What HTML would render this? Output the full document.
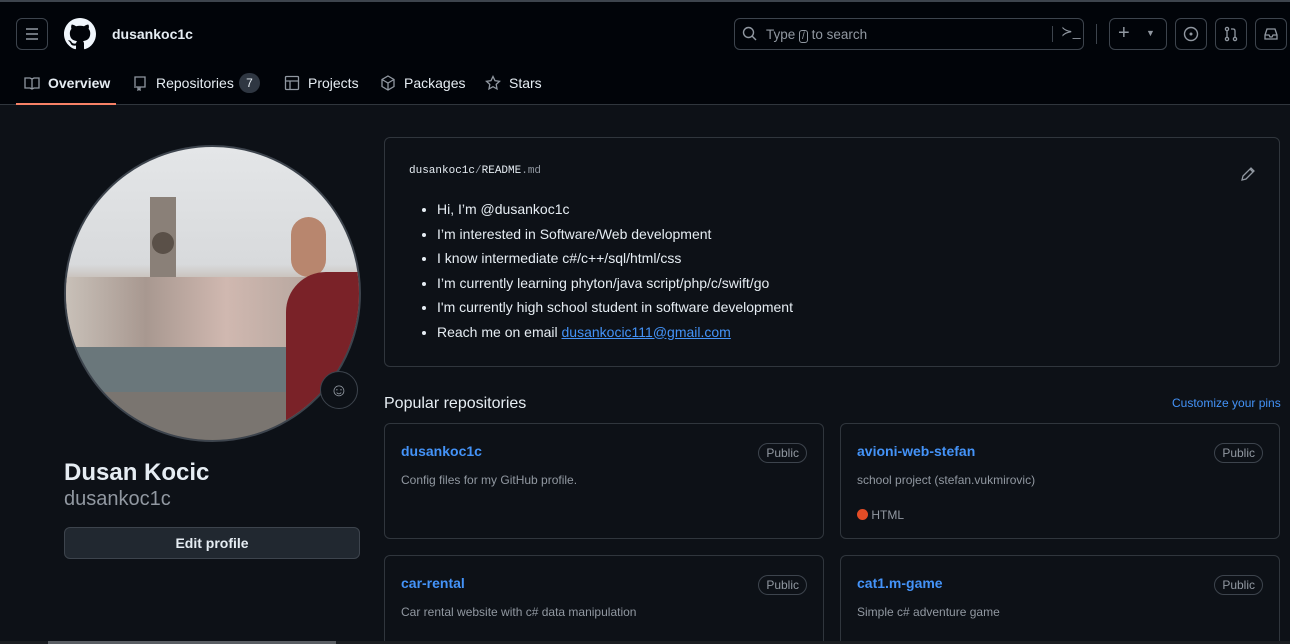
<!DOCTYPE html>
<html style="width:1290px;height:644px;overflow:hidden"><head><meta charset="utf-8"><style>
*{box-sizing:border-box;margin:0;padding:0}
html,body{width:1290px;height:644px;overflow:hidden}
body{background:#0d1117;font-family:"Liberation Sans",sans-serif;color:#e6edf3;position:relative}
.hdr{position:absolute;left:0;top:0;width:1290px;height:105px;background:#010409;border-top:2px solid #3d444d;border-bottom:1px solid #30363d}
.btn{position:absolute;border:1px solid #3d444d;border-radius:6px}
.a{position:absolute}
.tab{position:absolute;top:73px;font-size:14px;color:#e6edf3}
.card{position:absolute;border:1px solid #30363d;border-radius:6px;background:#0d1117}
.rn{position:absolute;left:16px;top:19px;font-size:14px;font-weight:bold;color:#4493f8}
.pub{position:absolute;right:16px;top:19px;border:1px solid #3d444d;border-radius:10px;font-size:12px;color:#9198a1;padding:2px 7px;height:20px}
.ds{position:absolute;left:16px;top:49px;font-size:12px;color:#9198a1}
li{margin-bottom:7px}
</style></head><body>
<div class="hdr">
<div class="btn" style="left:16px;top:16px;width:32px;height:32px"><svg width="30" height="30" style="position:absolute;left:0;top:0"><path d="M9 10h12M9 15h12M9 20h12" stroke="#9198a1" stroke-width="1.5"/></svg></div>
<svg class="a" style="left:64px;top:16px" width="32" height="32" viewBox="0 0 16 16"><path fill="#f0f6fc" d="M8 0C3.58 0 0 3.58 0 8c0 3.54 2.290 6.53 5.47 7.59.4.07.55-.17.55-.38 0-.19-.01-.82-.01-1.49-2.01.37-2.53-.49-2.690-.94-.09-.23-.48-.94-.82-1.13-.28-.15-.68-.52-.01-.53.63-.01 1.080.58 1.230.82.72 1.21 1.870.87 2.330.66.07-.52.28-.87.51-1.07-1.78-.2-3.64-.89-3.64-3.95 0-.87.31-1.59.82-2.15-.08-.2-.36-1.020.08-2.12 0 0 .67-.21 2.2.82.64-.18 1.32-.27 2-.27.68 0 1.360.09 2 .27 1.53-1.04 2.2-.82 2.2-.82.44 1.1.16 1.920.08 2.12.51.56.82 1.27.82 2.15 0 3.07-1.87 3.75-3.65 3.95.29.25.54.73.54 1.48 0 1.07-.01 1.93-.01 2.2 0 .21.15.46.55.38A8.013 8.013 0 0016 8c0-4.42-3.58-8-8-8z"/></svg>
<div class="a" style="left:112px;top:24px;font-size:14px;font-weight:bold">dusankoc1c</div>
<div class="btn" style="left:734px;top:16px;width:350px;height:32px"><svg class="a" style="left:7px;top:7px" width="16" height="16"><circle cx="6.5" cy="6.5" r="5" stroke="#9198a1" stroke-width="1.4" fill="none"/><path d="M10 10l4 4" stroke="#9198a1" stroke-width="1.4"/></svg>
<div class="a" style="left:31px;top:8px;font-size:13.5px;color:#9198a1">Type <span style="border:1px solid #9198a1;border-radius:3px;font-size:10px;padding:0 2px">/</span> to search</div>
<div class="a" style="left:317px;top:7px;width:1px;height:16px;background:#3d444d"></div>
<div class="a" style="left:326px;top:4px;color:#9198a1;font-size:14px">≻_</div></div>
<div class="a" style="left:1096px;top:22px;width:1px;height:20px;background:#3d444d"></div>
<div class="btn" style="left:1109px;top:16px;width:58px;height:32px;color:#9198a1"><span class="a" style="left:8px;top:3px;font-size:20px">+</span><span class="a" style="left:36px;top:9px;font-size:9px">▼</span></div>
<div class="btn" style="left:1175px;top:16px;width:32px;height:32px"><svg class="a" style="left:7px;top:7px" width="16" height="16"><circle cx="8" cy="8" r="6.5" stroke="#9198a1" stroke-width="1.4" fill="none"/><circle cx="8" cy="8" r="1.5" fill="#9198a1"/></svg></div>
<div class="btn" style="left:1215px;top:16px;width:32px;height:32px"><svg class="a" style="left:7px;top:7px" width="16" height="16" fill="none" stroke="#9198a1" stroke-width="1.3"><circle cx="4" cy="3" r="1.6"/><circle cx="4" cy="13" r="1.6"/><circle cx="12" cy="13" r="1.6"/><path d="M4 5v6M12 11V5q0-2-2-2H8"/></svg></div>
<div class="btn" style="left:1255px;top:16px;width:32px;height:32px"><svg class="a" style="left:7px;top:7px" width="16" height="16" fill="none" stroke="#9198a1" stroke-width="1.3"><path d="M2 9l2-6h8l2 6v4H2z M2 9h4l1 2h2l1-2h4"/></svg></div>
<svg class="a" style="left:24px;top:73px" width="16" height="16" fill="none" stroke="#9198a1" stroke-width="1.3"><path d="M1 3h5l2 1 2-1h5v10h-5l-2 1-2-1H1z M8 4v10"/></svg>
<div class="tab" style="left:48px;font-weight:bold">Overview</div>
<div class="a" style="left:16px;top:101px;width:100px;height:2px;background:#f78166"></div>
<svg class="a" style="left:132px;top:73px" width="16" height="16" fill="none" stroke="#9198a1" stroke-width="1.3"><path d="M3 13V2h10v10H4M6 12v3l1-1 1 1v-3"/></svg>
<div class="tab" style="left:156px">Repositories</div>
<div class="a" style="left:239px;top:71px;width:21px;height:20px;border-radius:10px;background:#2f3742;font-size:12px;text-align:center;line-height:20px">7</div>
<svg class="a" style="left:284px;top:73px" width="16" height="16" fill="none" stroke="#9198a1" stroke-width="1.3"><rect x="1.5" y="1.5" width="13" height="13" rx="1"/><path d="M1.5 6h13M6 6v8.5"/></svg>
<div class="tab" style="left:308px">Projects</div>
<svg class="a" style="left:380px;top:73px" width="16" height="16" fill="none" stroke="#9198a1" stroke-width="1.3"><path d="M8 1l6 3.5v7L8 15l-6-3.5v-7z M2 4.5L8 8l6-3.5M8 8v7"/></svg>
<div class="tab" style="left:404px">Packages</div>
<svg class="a" style="left:485px;top:73px" width="16" height="16" fill="none" stroke="#9198a1" stroke-width="1.3"><path d="M8 1.5l2 4.2 4.5.6-3.3 3.1.8 4.5L8 11.7l-4 2.2.8-4.5L1.5 6.3 6 5.7z"/></svg>
<div class="tab" style="left:509px">Stars</div>
</div>
<div class="a" style="left:64px;top:145px;width:297px;height:297px;border-radius:50%;overflow:hidden;border:2px solid #3d444d;background:linear-gradient(#e4e6e8 0%,#d8dadc 40%,#b9a89a 50%,#8b8580 60%,#6f7a7e 70%,#59656a 78%,#8a8784 88%,#5a5552 100%)">
<div class="a" style="left:84px;top:50px;width:26px;height:90px;background:#8a8078"></div>
<div class="a" style="left:86px;top:85px;width:22px;height:22px;border-radius:50%;background:#5a5048"></div>
<div class="a" style="left:0;top:130px;width:240px;height:70px;background:linear-gradient(90deg,#c8c0b8,#a89890,#d0b8b0,#b8a8a0)"></div>
<div class="a" style="left:0;top:200px;width:240px;height:45px;background:#6a777b"></div>
<div class="a" style="left:0;top:245px;width:240px;height:60px;background:#7a7570"></div>
<div class="a" style="left:225px;top:70px;width:35px;height:60px;border-radius:18px;background:#b8866e"></div>
<div class="a" style="left:220px;top:125px;width:90px;height:190px;border-radius:40px 0 0 0;background:#7a2228"></div>
</div>
<div class="a" style="left:320px;top:371px;width:38px;height:38px;border-radius:50%;background:#0d1117;border:1px solid #3d444d;color:#9198a1;text-align:center;line-height:36px;font-size:18px">☺</div>
<div class="a" style="left:64px;top:459px;font-size:24px;font-weight:bold">Dusan Kocic</div>
<div class="a" style="left:64px;top:488px;font-size:20px;color:#9198a1;font-weight:300">dusankoc1c</div>
<div class="a" style="left:64px;top:527px;width:296px;height:32px;border:1px solid #3d444d;border-radius:6px;background:#212830;text-align:center;line-height:30px;font-size:14px;font-weight:bold">Edit profile</div>
<div class="card" style="left:384px;top:137px;width:896px;height:230px">
<div class="a" style="left:24px;top:27px;font-family:'Liberation Mono',monospace;font-size:11px">dusankoc1c<span style="color:#9198a1">/</span>README<span style="color:#9198a1">.md</span></div>
<svg class="a" style="left:855px;top:28px" width="16" height="16" fill="none" stroke="#9198a1" stroke-width="1.3"><path d="M2 14l1-4 8-8 3 3-8 8z M10 3l3 3"/></svg>
<ul class="a" style="left:52px;top:63px;font-size:14px;line-height:17.5px">
<li>Hi, I’m @dusankoc1c</li><li>I’m interested in Software/Web development</li><li>I know intermediate c#/c++/sql/html/css</li><li>I’m currently learning phyton/java script/php/c/swift/go</li><li>I'm currently high school student in software development</li><li>Reach me on email <span style="color:#4493f8;text-decoration:underline">dusankocic111@gmail.com</span></li></ul>
</div>
<div class="a" style="left:384px;top:395px;font-size:16px">Popular repositories</div>
<div class="a" style="left:1172px;top:396px;font-size:12px;color:#4493f8">Customize your pins</div>
<div class="card" style="left:384px;top:423px;width:440px;height:116px"><div class="rn">dusankoc1c</div><div class="pub">Public</div><div class="ds">Config files for my GitHub profile.</div></div>
<div class="card" style="left:840px;top:423px;width:440px;height:116px"><div class="rn">avioni-web-stefan</div><div class="pub">Public</div><div class="ds">school project (stefan.vukmirovic)</div><div class="a" style="left:16px;top:84px;font-size:12px;color:#9198a1"><span style="display:inline-block;width:11px;height:11px;border-radius:50%;background:#e34c26;vertical-align:-1px"></span> HTML</div></div>
<div class="card" style="left:384px;top:555px;width:440px;height:116px"><div class="rn">car-rental</div><div class="pub">Public</div><div class="ds">Car rental website with c# data manipulation</div></div>
<div class="card" style="left:840px;top:555px;width:440px;height:116px"><div class="rn">cat1.m-game</div><div class="pub">Public</div><div class="ds">Simple c# adventure game</div></div>
<div class="a" style="left:0;top:641px;width:1290px;height:3px;background:#1a1d21"></div>
<div class="a" style="left:48px;top:641px;width:288px;height:3px;background:#5a5e63"></div>
</body></html>
